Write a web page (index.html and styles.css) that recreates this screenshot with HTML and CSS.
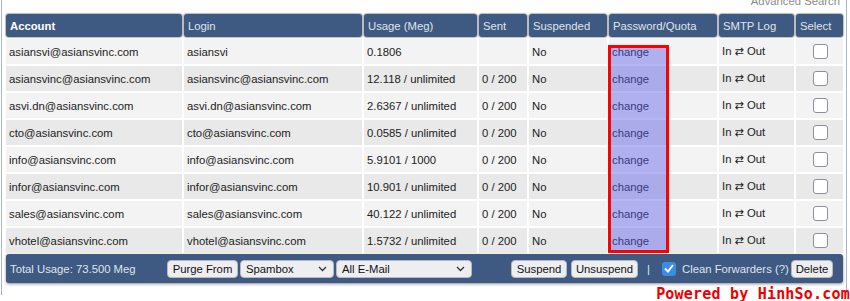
FILE: index.html
```html
<!DOCTYPE html>
<html>
<head>
<meta charset="utf-8">
<link rel="stylesheet" href="styles.css">
</head>
<body>
<div class="frame">
  <div class="adv"><a>Advanced Search</a></div>
  <div class="tablewrap">
    <table class="accounts">
      <colgroup>
        <col style="width:176px"><col style="width:178px"><col style="width:113px"><col style="width:48px">
        <col style="width:78px"><col style="width:108px"><col style="width:75px"><col style="width:47px">
      </colgroup>
      <thead>
        <tr>
          <th class="sorted">Account</th><th>Login</th><th>Usage (Meg)</th><th>Sent</th>
          <th>Suspended</th><th>Password/Quota</th><th>SMTP Log</th><th>Select</th>
        </tr>
      </thead>
      <tbody>
        <tr class="odd"><td>asiansvi@asiansvinc.com</td><td>asiansvi</td><td>0.1806</td><td></td><td>No</td><td class="chg">change</td><td>In <span class="arr">⇄</span> Out</td><td class="sel"><span class="cb"></span></td></tr>
        <tr class="even"><td>asiansvinc@asiansvinc.com</td><td>asiansvinc@asiansvinc.com</td><td>12.118 / unlimited</td><td>0 / 200</td><td>No</td><td class="chg">change</td><td>In <span class="arr">⇄</span> Out</td><td class="sel"><span class="cb"></span></td></tr>
        <tr class="odd"><td>asvi.dn@asiansvinc.com</td><td>asvi.dn@asiansvinc.com</td><td>2.6367 / unlimited</td><td>0 / 200</td><td>No</td><td class="chg">change</td><td>In <span class="arr">⇄</span> Out</td><td class="sel"><span class="cb"></span></td></tr>
        <tr class="even"><td>cto@asiansvinc.com</td><td>cto@asiansvinc.com</td><td>0.0585 / unlimited</td><td>0 / 200</td><td>No</td><td class="chg">change</td><td>In <span class="arr">⇄</span> Out</td><td class="sel"><span class="cb"></span></td></tr>
        <tr class="odd"><td>info@asiansvinc.com</td><td>info@asiansvinc.com</td><td>5.9101 / 1000</td><td>0 / 200</td><td>No</td><td class="chg">change</td><td>In <span class="arr">⇄</span> Out</td><td class="sel"><span class="cb"></span></td></tr>
        <tr class="even"><td>infor@asiansvinc.com</td><td>infor@asiansvinc.com</td><td>10.901 / unlimited</td><td>0 / 200</td><td>No</td><td class="chg">change</td><td>In <span class="arr">⇄</span> Out</td><td class="sel"><span class="cb"></span></td></tr>
        <tr class="odd"><td>sales@asiansvinc.com</td><td>sales@asiansvinc.com</td><td>40.122 / unlimited</td><td>0 / 200</td><td>No</td><td class="chg">change</td><td>In <span class="arr">⇄</span> Out</td><td class="sel"><span class="cb"></span></td></tr>
        <tr class="even"><td>vhotel@asiansvinc.com</td><td>vhotel@asiansvinc.com</td><td>1.5732 / unlimited</td><td>0 / 200</td><td>No</td><td class="chg">change</td><td>In <span class="arr">⇄</span> Out</td><td class="sel"><span class="cb"></span></td></tr>
      </tbody>
    </table>
    <div class="highlight"></div>
  </div>
  <div class="footer">
    <span class="total">Total Usage: 73.500 Meg</span>
    <span class="btn purge">Purge From</span>
    <span class="dd dd-spam">Spambox<svg class="chev" width="9" height="6" viewBox="0 0 9 6"><path d="M1 1 L4.5 4.5 L8 1" fill="none" stroke="#333" stroke-width="1.3"/></svg></span>
    <span class="dd dd-all">All E-Mail<svg class="chev" width="9" height="6" viewBox="0 0 9 6"><path d="M1 1 L4.5 4.5 L8 1" fill="none" stroke="#333" stroke-width="1.3"/></svg></span>
    <span class="btn suspend">Suspend</span>
    <span class="btn unsuspend">Unsuspend</span>
    <span class="pipe">|</span>
    <span class="cbx"><svg width="10" height="9" viewBox="0 0 10 9"><path d="M1 4.5 L4 7.5 L9 1" fill="none" stroke="#fff" stroke-width="2"/></svg></span>
    <span class="cleanlabel">Clean Forwarders (?)</span>
    <span class="btn delete">Delete</span>
  </div>
  <div class="powered">Powered by HinhSo.com</div>
</div>
</body>
</html>
```
FILE: styles.css
```css
html, body {
  margin: 0;
  padding: 0;
  background: #fff;
}
body {
  font-family: "Liberation Sans", Arial, sans-serif;
  font-size: 11.3px;
  color: #222;
  overflow: hidden;
  height: 301px;
}
.frame {
  margin-left: 1px;
  width: 846px;
  height: 301px;
  border-left: 1px solid #a9b6c9;
  border-right: 1px solid #a9b6c9;
  box-sizing: border-box;
  padding-left: 2px;
}
.adv {
  margin-top: -6px;
  height: 16px;
  line-height: 14px;
  text-align: right;
  padding-right: 6px;
  color: #8a8a8a;
}
.adv a {
  color: #8a8a8a;
}
.tablewrap {
  position: relative;
  width: 841px;
  margin-top: 2px;
}
.accounts {
  border-collapse: separate;
  border-spacing: 2px;
  table-layout: fixed;
  width: 841px;
}
.accounts th {
  background: #3f5a82;
  color: #dfe4ec;
  font-weight: normal;
  text-align: left;
  height: 23px;
  padding: 0 4px;
  border-radius: 3px;
  box-shadow: 0 0 1px 1px rgba(60, 60, 60, 0.35);
  white-space: nowrap;
}
.accounts th.sorted {
  color: #fff;
  font-weight: bold;
}
.accounts td {
  height: 25px;
  padding: 0 2px 0 3px;
  white-space: nowrap;
  overflow: hidden;
}
.accounts tr.odd td { background: #f3f3f3; }
.accounts tr.even td { background: #e9e9e9; }
.accounts td.chg { color: #000; }
.arr { font-family: "DejaVu Sans", sans-serif; font-size: 11px; }
.accounts td.sel { text-align: center; }
.cb {
  display: inline-block;
  width: 13px;
  height: 13px;
  border: 1px solid #8f8f9d;
  border-radius: 3px;
  background: #fff;
  vertical-align: middle;
}
.highlight {
  position: absolute;
  left: 604px;
  top: 33px;
  width: 55px;
  height: 202px;
  border: 3px solid #ff0000;
  background: rgba(110, 110, 235, 0.5);
}
.footer {
  margin: -1px 0 0 2px;
  width: 837px;
  height: 29px;
  background: #3f5a82;
  border-radius: 3px;
  box-shadow: 0 1px 3px rgba(0, 0, 0, 0.45);
  display: flex;
  align-items: center;
  color: #dfe4ec;
  box-sizing: border-box;
  padding-left: 4px;
  white-space: nowrap;
}
.total {
  width: 157px;
  flex: none;
}
.btn, .dd {
  flex: none;
  height: 18px;
  box-sizing: border-box;
  background: #eeeef1;
  border: 1px solid #b8b8c0;
  border-radius: 4px;
  color: #111;
  display: flex;
  align-items: center;
  padding: 0 2px;
  white-space: nowrap;
}
.dd {
  justify-content: space-between;
  margin-left: 2px;
  padding: 0 6px 0 5px;
}
.dd-spam { width: 94px; }
.dd-all { width: 136px; }
.purge { width: 71px; justify-content: center; }
.suspend { width: 56px; margin-left: 39px; justify-content: center; }
.unsuspend { width: 67px; margin-left: 4px; justify-content: center; }
.pipe { margin-left: 9px; width: 6px; }
.cbx {
  margin-left: 9px;
  width: 14px;
  height: 14px;
  border-radius: 3px;
  background: #3a8ee0;
  display: flex;
  align-items: center;
  justify-content: center;
  flex: none;
}
.cleanlabel { margin-left: 6px; width: 106px; flex: none; }
.delete { width: 42px; margin-left: 3px; justify-content: center; }
.powered {
  text-align: right;
  font-family: "DejaVu Sans Mono", monospace;
  font-weight: bold;
  font-size: 15px;
  color: #ee0000;
  margin-top: 3px;
  margin-right: -4px;
  line-height: 16px;
  letter-spacing: 0.2px;
}
```
